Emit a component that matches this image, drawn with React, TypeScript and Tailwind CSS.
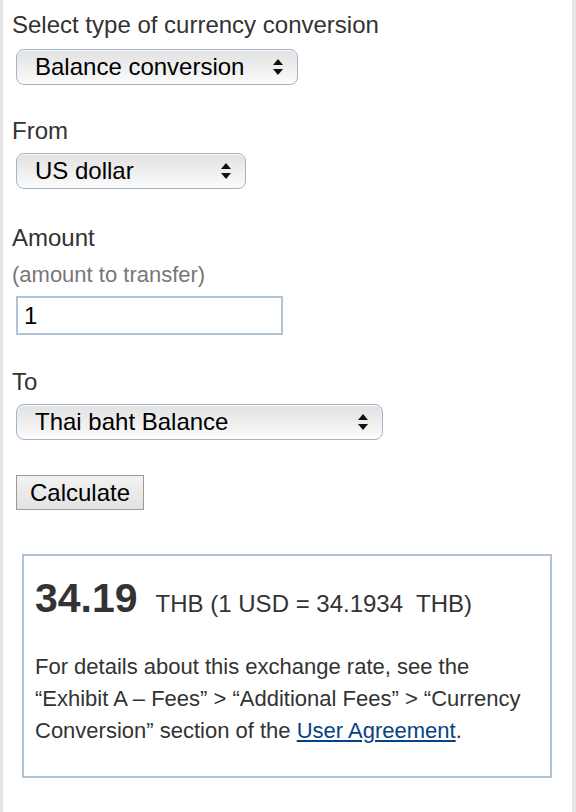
import React from "react";

function Arrows() {
  return (
    <svg width="10" height="16" viewBox="0 0 10 16" className="shrink-0">
      <polygon points="0,6 5,0 10,6" fill="#111" />
      <polygon points="0,10 10,10 5,16" fill="#111" />
    </svg>
  );
}

function FakeSelect({ label, width }: { label: string; width: string }) {
  return (
    <div
      className={`${width} h-[36px] flex items-center justify-between pl-[18px] pr-[14px] rounded-[8px] border border-[#9fb5cd] bg-gradient-to-b from-[#e2e2e2] via-[#eeeeee] to-[#fcfcfc] shadow-[inset_0_1px_1px_rgba(255,255,255,0.9)] text-[24px] leading-[28px] text-black`}
    >
      <span>{label}</span>
      <Arrows />
    </div>
  );
}

export default function App() {
  return (
    <div
      className="w-[576px] h-[812px] bg-white border-l-[3px] border-r-[4px] border-[#e6e6e6] pl-[9px] pt-[11px] text-[#333]"
      style={{ fontFamily: '"Liberation Sans", Arial, Helvetica, sans-serif' }}
    >
      <div className="text-[24px] leading-[28px]">Select type of currency conversion</div>
      <div className="mt-[10px] pl-[4px]">
        <FakeSelect label="Balance conversion" width="w-[282px]" />
      </div>

      <div className="mt-[32px] text-[24px] leading-[28px]">From</div>
      <div className="mt-[8px] pl-[4px]">
        <FakeSelect label="US dollar" width="w-[230px]" />
      </div>

      <div className="mt-[35px] text-[24px] leading-[28px]">Amount</div>
      <div className="mt-[9px] text-[22px] leading-[28px] text-[#777]">(amount to transfer)</div>
      <div className="mt-[7px] pl-[4px]">
        <div className="w-[267px] h-[39px] border-2 border-[#b1c4d7] flex items-center pl-[6px] text-[24px] text-black bg-white">
          1
        </div>
      </div>

      <div className="mt-[33px] text-[24px] leading-[28px]">To</div>
      <div className="mt-[8px] pl-[4px]">
        <FakeSelect label="Thai baht Balance" width="w-[367px]" />
      </div>

      <div className="mt-[35px] pl-[4px]">
        <div className="w-[128px] h-[35px] border border-[#9a9a9a] bg-gradient-to-b from-[#f2f2f2] to-[#e2e2e2] flex items-center justify-center text-[24px] leading-[28px] text-black">
          Calculate
        </div>
      </div>

      <div className="mt-[44px] ml-[10px] w-[530px] h-[224px] border-2 border-[#b1c4d7] pl-[11px] pt-[18px]">
        <div className="flex items-baseline h-[48px] leading-[48px]">
          <span className="text-[41px] font-bold text-[#333]">34.19</span>
          <span className="ml-[18px] text-[24px] text-[#333]">THB (1 USD = 34.1934&nbsp; THB)</span>
        </div>
        <p className="mt-[29px] text-[22px] leading-[32px] text-[#333]">
          For details about this exchange rate, see the
          <br />
          “Exhibit A – Fees” &gt; “Additional Fees” &gt; “Currency
          <br />
          Conversion” section of the{" "}
          <a className="text-[#084283] underline">User Agreement</a>.
        </p>
      </div>
    </div>
  );
}
